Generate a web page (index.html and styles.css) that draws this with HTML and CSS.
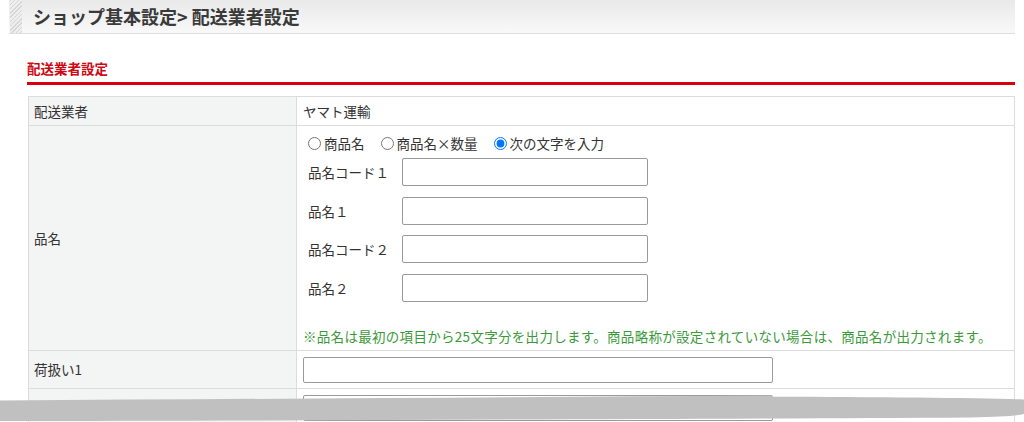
FILE: index.html
```html
<!DOCTYPE html>
<html lang="ja">
<head>
<meta charset="utf-8">
<title>配送業者設定</title>
<link rel="stylesheet" href="styles.css">
</head>
<body>
<div class="page">
  <div class="pagehead">
    <span class="stripe"></span>
    <h1 class="pagetitle">ショップ基本設定&gt; 配送業者設定</h1>
  </div>
  <div class="content">
    <h2 class="sectitle">配送業者設定</h2>
    <table class="form">
      <tr>
        <th>配送業者</th>
        <td>ヤマト運輸</td>
      </tr>
      <tr>
        <th>品名</th>
        <td class="namecell">
          <div class="radios">
            <label class="opt"><input type="radio" name="itemname">商品名</label>
            <label class="opt"><input type="radio" name="itemname">商品名×数量</label>
            <label class="opt"><input type="radio" name="itemname" checked>次の文字を入力</label>
          </div>
          <div class="namegrid">
            <span class="lbl">品名コード１</span><input class="txt" type="text">
            <span class="lbl">品名１</span><input class="txt" type="text">
            <span class="lbl">品名コード２</span><input class="txt" type="text">
            <span class="lbl">品名２</span><input class="txt" type="text">
          </div>
          <p class="note">※品名は最初の項目から25文字分を出力します。商品略称が設定されていない場合は、商品名が出力されます。</p>
        </td>
      </tr>
      <tr>
        <th>荷扱い1</th>
        <td class="inputcell"><input class="wide" type="text"></td>
      </tr>
      <tr>
        <th>荷扱い2</th>
        <td class="inputcell"><input class="wide" type="text"></td>
      </tr>
    </table>
  </div>
</div>
<svg class="tear" width="1024" height="32" viewBox="0 390 1024 32" xmlns="http://www.w3.org/2000/svg">
  <path d="M0,400.5 C250,399 520,397 772,395.5 L773,396.8 C880,397 980,398 1024,399.5 L1024,414 C1015,416 1000,417 970,417.5 C700,419 300,420.5 0,421 Z" fill="#c0c0c0"/>
</svg>
</body>
</html>
```
FILE: styles.css
```css
html, body {
  margin: 0;
  padding: 0;
  background: #fff;
}
body {
  font-family: "Noto Sans CJK JP", "Noto Sans", sans-serif;
  font-size: 13.5px;
  color: #333;
  overflow: hidden;
  height: 422px;
  position: relative;
}
.page {
  padding: 0 9px 0 9px;
}
.pagehead {
  display: flex;
  align-items: stretch;
  height: 33px;
  border-bottom: 1px solid #dedede;
  background: linear-gradient(#e9e9e9, #f9f9f9);
}
.stripe {
  width: 12px;
  margin-left: 1px;
  background: repeating-linear-gradient(135deg, #d6d6d6 0 1px, #eeeeee 1px 3px);
}
.pagetitle {
  margin: 0;
  padding-left: 11px;
  font-size: 18px;
  font-weight: 700;
  color: #3a3a3a;
  line-height: 32px;
}
.content {
  padding-left: 18px;
}
.sectitle {
  margin: 25px 0 0 0;
  font-size: 13.5px;
  font-weight: 700;
  color: #cc0a14;
  line-height: 18px;
  padding-bottom: 5px;
  border-bottom: 3px solid #d8000c;
}
.form {
  margin-top: 11px;
  margin-left: 1px;
  width: calc(100% - 1px);
  border-collapse: collapse;
}
.form th, .form td {
  border: 1px solid #dcdcdc;
  line-height: 18px;
  padding: 5px 6px;
  text-align: left;
}
.form th {
  width: 256px;
  background: #f3f4f4;
  font-weight: 400;
  vertical-align: middle;
  padding-left: 5px;
}
.form td {
  background: #fff;
}
.namecell {
  padding-top: 6px !important;
  padding-bottom: 5px !important;
}
.radios {
  display: flex;
  gap: 11px;
  height: 22px;
  align-items: center;
}
.opt {
  display: flex;
  align-items: center;
}
.opt input {
  width: 13px;
  height: 13px;
  margin: 0 3px 0 5px;
}
.namegrid {
  margin-top: 4px;
  display: grid;
  grid-template-columns: 94px 246px;
  grid-auto-rows: 28px;
  row-gap: 10.67px;
  align-items: center;
  padding-left: 5px;
}
.lbl {
  line-height: 18px;
}
.txt, .wide {
  box-sizing: border-box;
  border: 1px solid #9a9a9a;
  border-radius: 2px;
  background: #fff;
  margin: 0;
  font: inherit;
}
.txt {
  width: 246px;
  height: 28px;
}
.note {
  margin: 25px 0 0 0;
  color: #3a9a3a;
  line-height: 18px;
  letter-spacing: 0.3px;
}
.inputcell {
  padding: 6px 6px 5px 6px !important;
}
.wide {
  display: block;
  width: 470px;
  height: 26px;
}
.tear {
  position: absolute;
  left: 0;
  top: 390px;
  display: block;
}
```
